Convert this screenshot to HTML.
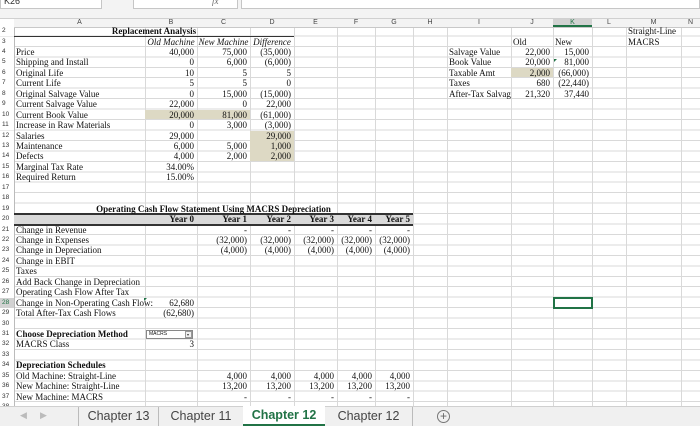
<!DOCTYPE html>
<html><head><meta charset="utf-8">
<style>
*{margin:0;padding:0;box-sizing:border-box}
body{width:700px;height:426px;overflow:hidden;background:#fff;position:relative;font-family:"Liberation Serif",serif;font-size:9px;color:#111}
.a{position:absolute;height:10.45px;line-height:10.45px;white-space:nowrap;overflow:visible}
.r{text-align:right;padding-right:3px}
.c{text-align:center}
.l{padding-left:2px}
.b{font-weight:bold}
.i{font-style:italic}
#grid{position:absolute;left:0;top:26px;width:700px;height:380px;
background-image:repeating-linear-gradient(to bottom,transparent 0,transparent 9.45px,#d9d9d9 9.45px,#d9d9d9 10.45px)}
.v{position:absolute;top:19px;height:387px;width:1px;background:#d9d9d9}
.rn{position:absolute;left:0;width:14px;height:10.45px;line-height:10.45px;font-family:"Liberation Sans",sans-serif;font-size:6.5px;color:#333;padding-left:2px;background:#fff}
.ch{position:absolute;top:19px;height:8px;line-height:8px;font-family:"Liberation Sans",sans-serif;font-size:7px;color:#444;text-align:center;background:#f3f3f3}
.tan{position:absolute;background:#ddd9c4;height:9.45px}
</style></head><body>
<div style="position:absolute;left:0;top:0;width:700px;height:19px;background:#f3f3f3"></div>
<div style="position:absolute;left:0;top:0;width:102px;height:9px;background:#fff;border:1px solid #c6c6c6;border-top:none"></div>
<div style="position:absolute;left:4px;top:-4px;font-family:'Liberation Sans',sans-serif;font-size:9px;color:#333">K26</div>
<div style="position:absolute;left:133px;top:0;width:105px;height:9px;background:#fff;border:1px solid #c6c6c6;border-top:none"></div>
<div style="position:absolute;left:212px;top:-4px;font-size:9px;font-style:italic;color:#666">fx</div>
<div style="position:absolute;left:241px;top:0;width:459px;height:9px;background:#fff;border:1px solid #c6c6c6;border-top:none"></div>
<div style="position:absolute;left:0;top:18px;width:700px;height:1px;background:#d0d0d0"></div>

<div id="grid"></div>
<div style="position:absolute;left:14px;top:27px;width:1px;height:379px;background:#bbb"></div>
<div class="v" style="left:145px"></div><div class="v" style="left:197px"></div><div class="v" style="left:250px"></div>
<div class="v" style="left:294px"></div><div class="v" style="left:337px"></div><div class="v" style="left:375px"></div>
<div class="v" style="left:413px"></div><div class="v" style="left:447px"></div><div class="v" style="left:511px"></div>
<div class="v" style="left:553px"></div><div class="v" style="left:592px"></div><div class="v" style="left:626px"></div>
<div class="v" style="left:681px"></div>

<div class="ch" style="left:14px;width:131px">A</div><div class="ch" style="left:145px;width:52px">B</div>
<div class="ch" style="left:197px;width:53px">C</div><div class="ch" style="left:250px;width:44px">D</div>
<div class="ch" style="left:294px;width:43px">E</div><div class="ch" style="left:337px;width:38px">F</div>
<div class="ch" style="left:375px;width:38px">G</div><div class="ch" style="left:413px;width:34px">H</div>
<div class="ch" style="left:447px;width:64px">I</div><div class="ch" style="left:511px;width:42px">J</div>
<div class="ch" style="left:553px;width:39px;background:#d2d2d2;border-bottom:2px solid #217346;color:#217346">K</div>
<div class="ch" style="left:592px;width:34px">L</div><div class="ch" style="left:626px;width:55px">M</div>
<div class="ch" style="left:681px;width:19px">N</div>
<div style="position:absolute;left:0;top:27px;width:700px;height:1px;background:#c8c8c8"></div>

<div class="tan" style="left:145px;top:109.6px;width:52px"></div>
<div class="tan" style="left:197px;top:109.6px;width:53px"></div>
<div class="tan" style="left:250px;top:130.5px;width:44px;height:30.4px"></div>
<div class="tan" style="left:511px;top:67.8px;width:42px"></div>
<div style="position:absolute;left:14px;top:214.1px;width:399px;height:10.45px;background:#d9d9d9"></div>
<div style="position:absolute;left:14px;top:35.5px;width:280px;height:1.5px;background:#333"></div>
<div style="position:absolute;left:14px;top:213px;width:399px;height:2px;background:#333"></div>
<div style="position:absolute;left:14px;top:223.5px;width:399px;height:2px;background:#333"></div>
<div style="position:absolute;left:553px;top:297px;width:40px;height:12px;border:2px solid #217346"></div>

<div class="rn" style="top:26px">2</div><div class="rn" style="top:36.5px">3</div><div class="rn" style="top:47px">4</div>
<div class="rn" style="top:57.4px">5</div><div class="rn" style="top:67.8px">6</div><div class="rn" style="top:78.3px">7</div>
<div class="rn" style="top:88.7px">8</div><div class="rn" style="top:99.2px">9</div><div class="rn" style="top:109.6px">10</div>
<div class="rn" style="top:120px">11</div><div class="rn" style="top:130.5px">12</div><div class="rn" style="top:141px">13</div>
<div class="rn" style="top:151.4px">14</div><div class="rn" style="top:161.9px">15</div><div class="rn" style="top:172.3px">16</div>
<div class="rn" style="top:182.8px">17</div><div class="rn" style="top:193.2px">18</div><div class="rn" style="top:203.7px">19</div>
<div class="rn" style="top:214.1px">20</div><div class="rn" style="top:224.5px">21</div><div class="rn" style="top:235px">22</div>
<div class="rn" style="top:245.4px">23</div><div class="rn" style="top:255.9px">24</div><div class="rn" style="top:266.3px">25</div>
<div class="rn" style="top:276.8px">26</div><div class="rn" style="top:287.2px">27</div>
<div class="rn" style="top:297.7px;background:#d2d2d2;color:#217346">28</div>
<div class="rn" style="top:308.1px">29</div><div class="rn" style="top:318.5px">30</div><div class="rn" style="top:329px">31</div>
<div class="rn" style="top:339.4px">32</div><div class="rn" style="top:349.9px">33</div><div class="rn" style="top:360.3px">34</div>
<div class="rn" style="top:370.8px">35</div><div class="rn" style="top:381.2px">36</div><div class="rn" style="top:391.7px">37</div>
<div class="rn" style="top:402px">38</div>

<div class="a c b" style="left:14px;width:280px;top:26px">Replacement Analysis</div>
<div class="a c i" style="left:145px;width:52px;top:36.5px">Old Machine</div>
<div class="a c i" style="left:197px;width:53px;top:36.5px">New Machine</div>
<div class="a c i" style="left:250px;width:44px;top:36.5px">Difference</div>

<div class="a l" style="left:14px;top:47px">Price</div>
<div class="a l" style="left:14px;top:57.4px">Shipping and Install</div>
<div class="a l" style="left:14px;top:67.8px">Original Life</div>
<div class="a l" style="left:14px;top:78.3px">Current Life</div>
<div class="a l" style="left:14px;top:88.7px">Original Salvage Value</div>
<div class="a l" style="left:14px;top:99.2px">Current Salvage Value</div>
<div class="a l" style="left:14px;top:109.6px">Current Book Value</div>
<div class="a l" style="left:14px;top:120px">Increase in Raw Materials</div>
<div class="a l" style="left:14px;top:130.5px">Salaries</div>
<div class="a l" style="left:14px;top:141px">Maintenance</div>
<div class="a l" style="left:14px;top:151.4px">Defects</div>
<div class="a l" style="left:14px;top:161.9px">Marginal Tax Rate</div>
<div class="a l" style="left:14px;top:172.3px">Required Return</div>

<div class="a r" style="left:145px;width:52px;top:47px">40,000</div>
<div class="a r" style="left:145px;width:52px;top:57.4px">0</div>
<div class="a r" style="left:145px;width:52px;top:67.8px">10</div>
<div class="a r" style="left:145px;width:52px;top:78.3px">5</div>
<div class="a r" style="left:145px;width:52px;top:88.7px">0</div>
<div class="a r" style="left:145px;width:52px;top:99.2px">22,000</div>
<div class="a r" style="left:145px;width:52px;top:109.6px">20,000</div>
<div class="a r" style="left:145px;width:52px;top:120px">0</div>
<div class="a r" style="left:145px;width:52px;top:130.5px">29,000</div>
<div class="a r" style="left:145px;width:52px;top:141px">6,000</div>
<div class="a r" style="left:145px;width:52px;top:151.4px">4,000</div>
<div class="a r" style="left:145px;width:52px;top:161.9px">34.00%</div>
<div class="a r" style="left:145px;width:52px;top:172.3px">15.00%</div>

<div class="a r" style="left:197px;width:53px;top:47px">75,000</div>
<div class="a r" style="left:197px;width:53px;top:57.4px">6,000</div>
<div class="a r" style="left:197px;width:53px;top:67.8px">5</div>
<div class="a r" style="left:197px;width:53px;top:78.3px">5</div>
<div class="a r" style="left:197px;width:53px;top:88.7px">15,000</div>
<div class="a r" style="left:197px;width:53px;top:99.2px">0</div>
<div class="a r" style="left:197px;width:53px;top:109.6px">81,000</div>
<div class="a r" style="left:197px;width:53px;top:120px">3,000</div>
<div class="a r" style="left:197px;width:53px;top:141px">5,000</div>
<div class="a r" style="left:197px;width:53px;top:151.4px">2,000</div>

<div class="a r" style="left:250px;width:44px;top:47px">(35,000)</div>
<div class="a r" style="left:250px;width:44px;top:57.4px">(6,000)</div>
<div class="a r" style="left:250px;width:44px;top:67.8px">5</div>
<div class="a r" style="left:250px;width:44px;top:78.3px">0</div>
<div class="a r" style="left:250px;width:44px;top:88.7px">(15,000)</div>
<div class="a r" style="left:250px;width:44px;top:99.2px">22,000</div>
<div class="a r" style="left:250px;width:44px;top:109.6px">(61,000)</div>
<div class="a r" style="left:250px;width:44px;top:120px">(3,000)</div>
<div class="a r" style="left:250px;width:44px;top:130.5px">29,000</div>
<div class="a r" style="left:250px;width:44px;top:141px">1,000</div>
<div class="a r" style="left:250px;width:44px;top:151.4px">2,000</div>

<div class="a l" style="left:511px;top:36.5px">Old</div>
<div class="a l" style="left:553px;top:36.5px">New</div>
<div class="a l" style="left:626px;top:26px">Straight-Line</div>
<div class="a l" style="left:626px;top:36.5px">MACRS</div>
<div class="a l" style="left:447px;top:47px">Salvage Value</div>
<div class="a l" style="left:447px;top:57.4px">Book Value</div>
<div class="a l" style="left:447px;top:67.8px">Taxable Amt</div>
<div class="a l" style="left:447px;top:78.3px">Taxes</div>
<div class="a l" style="left:447px;top:88.7px;width:64px;overflow:hidden">After-Tax Salvage</div>
<div class="a r" style="left:511px;width:42px;top:47px">22,000</div>
<div class="a r" style="left:511px;width:42px;top:57.4px">20,000</div>
<div class="a r" style="left:511px;width:42px;top:67.8px">2,000</div>
<div class="a r" style="left:511px;width:42px;top:78.3px">680</div>
<div class="a r" style="left:511px;width:42px;top:88.7px">21,320</div>
<div class="a r" style="left:553px;width:39px;top:47px">15,000</div>
<div class="a r" style="left:553px;width:39px;top:57.4px">81,000</div>
<div class="a r" style="left:553px;width:39px;top:67.8px">(66,000)</div>
<div class="a r" style="left:553px;width:39px;top:78.3px">(22,440)</div>
<div class="a r" style="left:553px;width:39px;top:88.7px">37,440</div>
<div style="position:absolute;left:554px;top:59px;width:0;height:0;border-top:3px solid #217346;border-right:3px solid transparent"></div>

<div class="a c b" style="left:14px;width:399px;top:203.7px">Operating Cash Flow Statement Using MACRS Depreciation</div>
<div class="a r b" style="left:145px;width:52px;top:214.1px">Year 0</div>
<div class="a r b" style="left:197px;width:53px;top:214.1px">Year 1</div>
<div class="a r b" style="left:250px;width:44px;top:214.1px">Year 2</div>
<div class="a r b" style="left:294px;width:43px;top:214.1px">Year 3</div>
<div class="a r b" style="left:337px;width:38px;top:214.1px">Year 4</div>
<div class="a r b" style="left:375px;width:38px;top:214.1px">Year 5</div>

<div class="a l" style="left:14px;top:224.5px">Change in Revenue</div>
<div class="a l" style="left:14px;top:235px">Change in Expenses</div>
<div class="a l" style="left:14px;top:245.4px">Change in Depreciation</div>
<div class="a l" style="left:14px;top:255.9px">Change in EBIT</div>
<div class="a l" style="left:14px;top:266.3px">Taxes</div>
<div class="a l" style="left:14px;top:276.8px">Add Back Change in Depreciation</div>
<div class="a l" style="left:14px;top:287.2px">Operating Cash Flow After Tax</div>
<div class="a l" style="left:14px;top:297.7px">Change in Non-Operating Cash Flow:</div>
<div style="position:absolute;left:144px;top:298px;width:0;height:0;border-top:3px solid #217346;border-right:3px solid transparent"></div>
<div class="a l" style="left:14px;top:308.1px">Total After-Tax Cash Flows</div>
<div class="a l b" style="left:14px;top:329px">Choose Depreciation Method</div>
<div class="a l" style="left:14px;top:339.4px">MACRS Class</div>
<div class="a l b" style="left:14px;top:360.3px">Depreciation Schedules</div>
<div class="a l" style="left:14px;top:370.8px">Old Machine: Straight-Line</div>
<div class="a l" style="left:14px;top:381.2px">New Machine: Straight-Line</div>
<div class="a l" style="left:14px;top:391.7px">New Machine: MACRS</div>

<div class="a r" style="left:145px;width:52px;top:297.7px">62,680</div>
<div class="a r" style="left:145px;width:52px;top:308.1px">(62,680)</div>
<div class="a r" style="left:145px;width:52px;top:339.4px">3</div>
<div style="position:absolute;left:146px;top:330px;width:47px;height:9px;border:1px solid #888;background:#fff;font-family:'Liberation Sans',sans-serif;font-size:5px;line-height:7px;padding-left:2px">MACRS</div>
<div style="position:absolute;left:185px;top:331px;width:7px;height:7px;border:1px solid #999;background:#f0f0f0"></div>
<div style="position:absolute;left:187px;top:334px;width:0;height:0;border-left:1.5px solid transparent;border-right:1.5px solid transparent;border-top:2px solid #333"></div>

<div class="a r" style="left:197px;width:53px;top:224.5px">-</div>
<div class="a r" style="left:250px;width:44px;top:224.5px">-</div>
<div class="a r" style="left:294px;width:43px;top:224.5px">-</div>
<div class="a r" style="left:337px;width:38px;top:224.5px">-</div>
<div class="a r" style="left:375px;width:38px;top:224.5px">-</div>
<div class="a r" style="left:197px;width:53px;top:235px">(32,000)</div>
<div class="a r" style="left:250px;width:44px;top:235px">(32,000)</div>
<div class="a r" style="left:294px;width:43px;top:235px">(32,000)</div>
<div class="a r" style="left:337px;width:38px;top:235px">(32,000)</div>
<div class="a r" style="left:375px;width:38px;top:235px">(32,000)</div>
<div class="a r" style="left:197px;width:53px;top:245.4px">(4,000)</div>
<div class="a r" style="left:250px;width:44px;top:245.4px">(4,000)</div>
<div class="a r" style="left:294px;width:43px;top:245.4px">(4,000)</div>
<div class="a r" style="left:337px;width:38px;top:245.4px">(4,000)</div>
<div class="a r" style="left:375px;width:38px;top:245.4px">(4,000)</div>
<div class="a r" style="left:197px;width:53px;top:370.8px">4,000</div>
<div class="a r" style="left:250px;width:44px;top:370.8px">4,000</div>
<div class="a r" style="left:294px;width:43px;top:370.8px">4,000</div>
<div class="a r" style="left:337px;width:38px;top:370.8px">4,000</div>
<div class="a r" style="left:375px;width:38px;top:370.8px">4,000</div>
<div class="a r" style="left:197px;width:53px;top:381.2px">13,200</div>
<div class="a r" style="left:250px;width:44px;top:381.2px">13,200</div>
<div class="a r" style="left:294px;width:43px;top:381.2px">13,200</div>
<div class="a r" style="left:337px;width:38px;top:381.2px">13,200</div>
<div class="a r" style="left:375px;width:38px;top:381.2px">13,200</div>
<div class="a r" style="left:197px;width:53px;top:391.7px">-</div>
<div class="a r" style="left:250px;width:44px;top:391.7px">-</div>
<div class="a r" style="left:294px;width:43px;top:391.7px">-</div>
<div class="a r" style="left:337px;width:38px;top:391.7px">-</div>
<div class="a r" style="left:375px;width:38px;top:391.7px">-</div>

<div style="position:absolute;left:0;top:406px;width:700px;height:20px;background:#f0f0f0;border-top:1px solid #d0d0d0;font-family:'Liberation Sans',sans-serif;font-size:12.5px;color:#444">
  <div style="position:absolute;left:20px;top:3px;font-size:9px;color:#bbb">&#9664;</div>
  <div style="position:absolute;left:40px;top:3px;font-size:9px;color:#bbb">&#9654;</div>
  <div style="position:absolute;left:78px;top:0;width:80px;height:19px;border-left:1px solid #bbb;text-align:center;line-height:19px">Chapter 13</div>
  <div style="position:absolute;left:158px;top:0;width:85px;height:19px;border-left:1px solid #bbb;text-align:center;line-height:19px">Chapter 11</div>
  <div style="position:absolute;left:243px;top:-1px;width:82px;height:20px;background:#fff;border-bottom:2px solid #217346;text-align:center;line-height:19px;color:#217346;font-weight:bold">Chapter 12</div>
  <div style="position:absolute;left:325px;top:0;width:88px;height:19px;border-right:1px solid #bbb;text-align:center;line-height:19px">Chapter 12</div>
  <div style="position:absolute;left:437px;top:3px;width:13px;height:13px;border:1px solid #777;border-radius:50%;text-align:center;line-height:11px;font-size:12px;color:#666">+</div>
</div>
</body></html>
